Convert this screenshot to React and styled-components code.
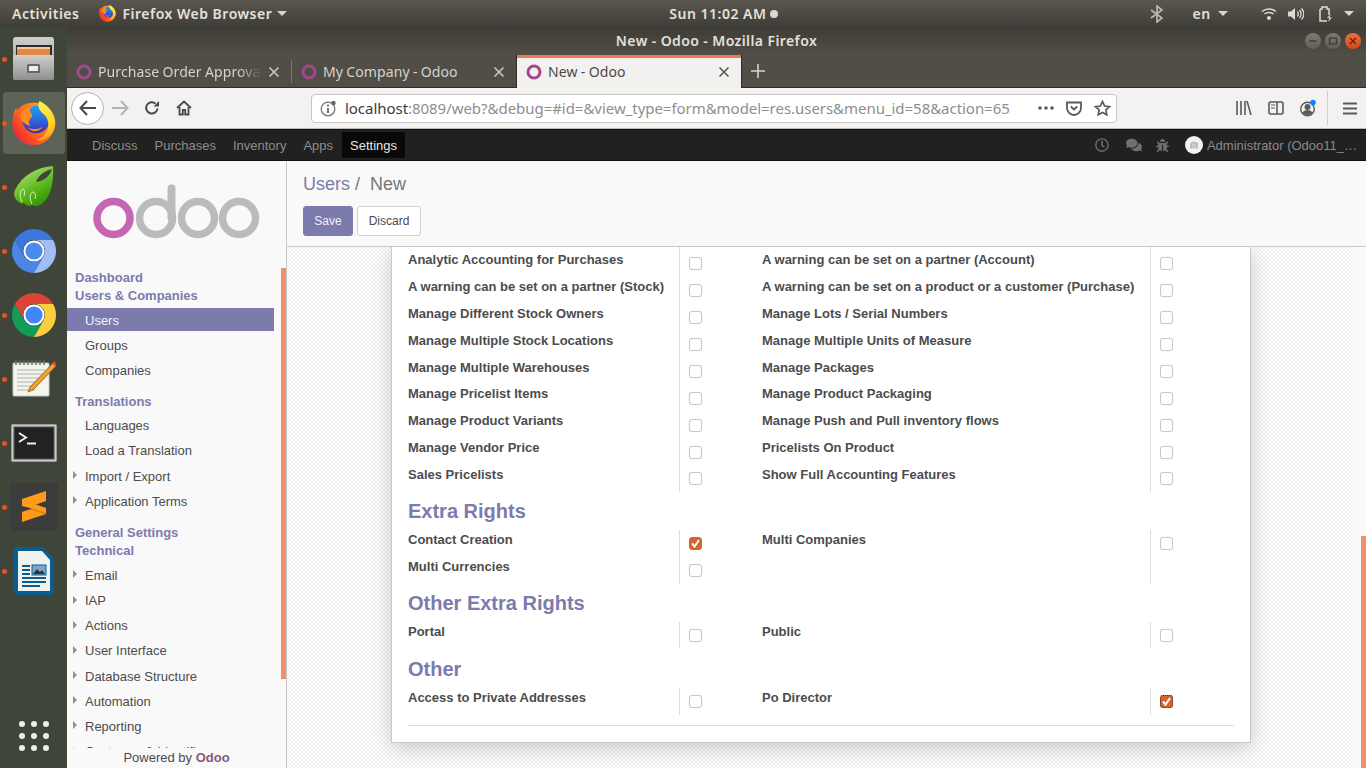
import React from "react";
import styled, { createGlobalStyle } from "styled-components";
import { FaRegClock, FaComments, FaBug, FaCamera } from "react-icons/fa";

const ubuntu = `"Noto Sans", "Open Sans", sans-serif`;
const arial = `"Liberation Sans", Arial, sans-serif`;

const Global = createGlobalStyle`
  html, body { margin: 0; padding: 0; width: 1366px; height: 768px; overflow: hidden; }
  * { box-sizing: border-box; }
  #root { width: 1366px; height: 768px; }
`;

const Screen = styled.div`width:1366px;height:768px;display:flex;flex-direction:column;overflow:hidden;font-family:${arial};`;
const TopBar = styled.header`
  height:27px;flex:none;display:flex;align-items:center;padding-left:12px;
  background:linear-gradient(#5a574f,#3f3d37);color:#e4e1da;font:600 14px/27px ${ubuntu};letter-spacing:.5px;
`;
const TopText = styled.span`margin-left:${p => p.$ml || 0}px;white-space:nowrap;display:flex;align-items:center;`;
const Caret = styled.i`
  display:block;margin-left:${p => p.$ml || 0}px;width:0;height:0;
  border-left:5px solid transparent;border-right:5px solid transparent;border-top:5px solid #d8d5ce;
`;
const TopIcon = styled.svg`display:block;margin-left:${p => p.$ml || 0}px;flex:none;`;
const ClockDot = styled.i`display:block;width:8px;height:8px;border-radius:50%;background:#d9d7d1;margin-left:4px;`;

const Desk = styled.div`flex:1;display:flex;min-height:0;`;
const Dock = styled.nav`width:67px;flex:none;background:#3f4539;display:flex;flex-direction:column;`;
const Tile = styled.div`height:64px;flex:none;position:relative;display:flex;align-items:center;justify-content:center;${p => p.$end ? "margin-top:auto;" : ""}`;
const ActiveBox = styled.div`
  width:62px;height:62px;border-radius:4px;display:flex;align-items:center;justify-content:center;
  background:${p => p.$on ? "#5e6357" : "transparent"};
`;
const RunDot = styled.i`position:absolute;left:2px;top:29.5px;width:5px;height:5px;border-radius:50%;background:#e95420;`;
const AppGrid = styled.div`display:grid;grid-template-columns:repeat(3,6px);gap:6px;`;
const AppDot = styled.i`display:block;width:6px;height:6px;border-radius:50%;background:#eeeeec;`;

const Win = styled.main`flex:1;min-width:0;display:flex;flex-direction:column;`;
const TitleBar = styled.div`
  height:28px;flex:none;position:relative;display:flex;align-items:center;justify-content:center;
  background:linear-gradient(#3e3c36,#504e46);color:#e3e0d9;font:600 14px/28px ${ubuntu};letter-spacing:.4px;
`;
const WinButtons = styled.div`position:absolute;right:5px;top:6px;display:flex;gap:4px;`;
const WinBtn = styled.div`
  width:16px;height:16px;border-radius:50%;display:flex;align-items:center;justify-content:center;
  background:${p => p.$close ? "linear-gradient(#f0703c,#d8491a)" : "linear-gradient(#7b7a73,#5e5d56)"};
`;
const TabBar = styled.div`height:33px;flex:none;display:flex;align-items:stretch;background:#504e46;border-bottom:1px solid #2e2d28;`;
const Tab = styled.div`
  width:224px;flex:none;display:flex;align-items:center;padding:1px 11px 0 9px;
  font:400 14px/1.4 ${ubuntu};letter-spacing:.1px;word-spacing:-.5px;color:${p => p.$active ? "#4c4b47" : "#d6d3cc"};
  ${p => p.$active ? "margin-left:1px;box-shadow:-1px 0 #2e2d28,1px 0 #2e2d28;background:#f2f1ef;border-top:3px solid #ee7b50;height:33px;padding-top:0;padding-bottom:2px;" : ""}
`;
const TabSep = styled.i`display:block;width:1px;margin:5px 0 4px;background:#77756c;flex:none;`;
const TabTitle = styled.span`
  flex:1;margin:0 6px;white-space:nowrap;overflow:hidden;
  ${p => p.$fade ? "-webkit-mask-image:linear-gradient(to right,#000 86%,transparent 100%);mask-image:linear-gradient(to right,#000 86%,transparent 100%);" : ""}
`;
const NewTab = styled.div`width:34px;display:flex;align-items:center;justify-content:center;flex:none;`;

const NavBar = styled.div`height:41px;flex:none;display:flex;align-items:center;background:#f3f2f0;border-bottom:1px solid #bdbcb8;padding-left:4px;`;
const BackBtn = styled.div`
  width:33px;height:33px;border-radius:50%;border:1px solid #b1b1b1;background:#fff;flex:none;
  display:flex;align-items:center;justify-content:center;
`;
const NavBtn = styled.div`width:${p => p.$w || 32}px;height:32px;flex:none;margin-left:${p => p.$ml || 0}px;display:flex;align-items:center;justify-content:center;`;
const UrlBox = styled.div`
  width:806px;height:29px;flex:none;margin-left:111px;background:#fff;border:1px solid #c8c7c3;border-radius:4px;
  display:flex;align-items:center;padding-left:8px;font:400 15px/1.4 ${ubuntu};letter-spacing:-.04px;color:#8e8e8e;white-space:nowrap;
`;
const Host = styled.span`color:#3b3b3b;`;
const UrlText = styled.span`margin-left:8px;flex:1;overflow:hidden;`;
const ToolSep = styled.i`display:block;width:1px;height:34px;background:#d0cfcb;margin:0 3px;flex:none;`;

const OdooBar = styled.div`
  height:32px;flex:none;background:#212121;border-top:1px solid #111;border-bottom:1px solid #111;
  display:flex;align-items:center;padding-left:17px;font:400 13px/1 ${arial};color:#8d8d8d;
`;
const AppLink = styled.a`
  height:26px;display:flex;align-items:center;padding:0 8px;white-space:nowrap;margin-right:1px;
  ${p => p.$active ? "background:#090909;color:#e6e6e6;margin-right:0;" : ""}
`;
const BarRight = styled.div`margin-left:auto;display:flex;align-items:center;height:100%;color:#6f6f6f;padding-right:9px;`;
const BarIcon = styled.span`display:flex;margin-right:${p => p.$mr}px;`;
const Avatar = styled.span`width:18px;height:18px;border-radius:50%;background:#f3f3f3;display:flex;align-items:center;justify-content:center;margin-right:4px;color:#bdbdbd;`;
const UserName = styled.span`color:#8a8a8a;white-space:nowrap;`;

const Body = styled.div`flex:1;min-height:0;display:flex;`;
const Side = styled.aside`width:220px;flex:none;background:#f9f9f9;border-right:1px solid #c9c9c9;display:flex;flex-direction:column;`;
const LogoWrap = styled.div`height:107px;flex:none;padding:23px 0 0 26px;`;
const SideScroll = styled.div`flex:1;min-height:0;display:flex;`;
const SideNav = styled.nav`flex:1;min-width:0;overflow:hidden;padding-right:7px;`;
const SideThumbCol = styled.div`width:5px;flex:none;`;
const SideThumb = styled.div`height:411px;background:#f09070;`;
const SectionTitle = styled.div`
  height:18px;padding-left:8px;font:700 13px/20px ${arial};color:#7c7bad;
  margin-top:${p => p.$mt || 0}px;white-space:nowrap;
`;
const Items = styled.ul`list-style:none;margin:4px 0 0;padding:0;`;
const Item = styled.li`
  height:23.2px;margin-bottom:2px;padding:1px 0 0 18px;position:relative;display:flex;align-items:center;
  font:400 13px/1 ${arial};white-space:nowrap;
  background:${p => p.$on ? "#7c7bad" : "transparent"};color:${p => p.$on ? "#f2f2f8" : "#4c4c4c"};
  ${p => p.$more ? `&::before{content:"";position:absolute;left:6px;top:7px;border-left:4px solid #8f8f8f;border-top:4px solid transparent;border-bottom:4px solid transparent;}` : ""}
`;
const SideFoot = styled.div`height:20px;flex:none;background:#f9f9f9;text-align:center;font:400 13px/20px ${arial};color:#4c4c4c;`;
const FootBrand = styled.b`color:#875a7b;`;

const Content = styled.section`flex:1;min-width:0;display:flex;flex-direction:column;`;
const Panel = styled.div`height:86px;flex:none;background:#f9f9f9;border-bottom:1px solid #c9c9c9;padding:12px 16px 0;`;
const Crumbs = styled.div`font:400 18px/22px ${arial};color:#777;white-space:pre;`;
const CrumbLink = styled.span`color:#7c7bad;`;
const Buttons = styled.div`display:flex;gap:4px;margin-top:11px;`;
const Btn = styled.button`
  height:30px;width:${p => p.$w}px;padding:0;border-radius:3px;font:400 12px/1 ${arial};
  background:${p => p.$primary ? "#7c7bad" : "#fff"};color:${p => p.$primary ? "#efeff6" : "#4c4c4c"};
  border:1px solid ${p => p.$primary ? "#7c7bad" : "#cfcfcf"};
`;
const Split = styled.div`flex:1;min-height:0;display:flex;`;
const FormArea = styled.div`
  flex:1;min-width:0;overflow:hidden;display:flex;justify-content:center;align-items:flex-start;padding-left:2px;
  background:repeating-conic-gradient(#f0f0f0 0 25%,#fdfdfd 0 50%) 0 0/4px 4px;
`;
const Sheet = styled.div`
  width:860px;flex:none;background:#fff;padding:0 16px 16px;border:1px solid #c8c8d3;border-top:0;
  box-shadow:0 5px 20px -1px rgba(0,0,0,.2);
`;
const Row = styled.div`
  display:grid;grid-template-columns:271px 83px 388px 84px;height:${p => p.$h || 26.875}px;
  font:700 13px/18.5px ${arial};color:#4c4c4c;
`;
const Lbl = styled.div`white-space:nowrap;padding-top:1px;`;
const ChkCell = styled.div`border-left:1px solid #ddd;padding:7.4px 0 0 9px;overflow:hidden;`;
const Box = styled.span`
  display:flex;align-items:center;justify-content:center;width:13px;height:13px;border-radius:3px;
  background:${p => p.$on ? "#d9622f" : "#fff"};
  border:1px solid ${p => p.$on ? "#d9622f" : "#c8c8c8"};box-shadow:${p => p.$on ? "none" : "0 0 1px #ddd"};
  ${p => p.$focus ? "outline:1px dotted #333;outline-offset:-1px;" : ""}
`;
const Heading = styled.h2`margin:0;height:${p => p.$h}px;padding-top:${p => p.$pt || 8}px;font:700 20px/22px ${arial};color:#7c7bad;`;
const Rule = styled.hr`margin:10px 0 0;border:0;border-top:1px solid #ddd;`;
const Track = styled.div`width:13px;flex:none;background:#f9f9f9;display:flex;flex-direction:column;justify-content:flex-end;align-items:flex-end;`;
const Thumb = styled.div`width:5px;height:232px;background:#f09070;`;

const Ring = () => (
  <svg width="16" height="16" viewBox="0 0 16 16" style={{ flex: "none" }}>
    <circle cx="8" cy="8" r="6" fill="none" stroke="#a2488f" strokeWidth="3" />
  </svg>
);
const Cross = ({ c = "#cfccc5" }) => (
  <svg width="12" height="12" viewBox="0 0 12 12" style={{ flex: "none" }}>
    <path d="M1.5 1.5l9 9M10.5 1.5l-9 9" stroke={c} strokeWidth="1.5" />
  </svg>
);
const Firefox = ({ s = 44, id = "a" }) => (
  <svg width={s} height={s} viewBox="0 0 64 64" style={{ display: "block", flex: "none" }}>
    <defs>
      <linearGradient id={id + "t"} x1=".2" y1="0" x2=".6" y2="1"><stop offset="0" stopColor="#fff45a" /><stop offset=".7" stopColor="#ffd21f" /><stop offset="1" stopColor="#ff9a1f" /></linearGradient>
      <linearGradient id={id + "b"} x1=".9" y1=".3" x2=".1" y2=".9"><stop offset="0" stopColor="#ffa01f" /><stop offset=".6" stopColor="#ff5a1f" /><stop offset="1" stopColor="#f0203c" /></linearGradient>
      <linearGradient id={id + "g"} x1=".5" y1="0" x2=".5" y2="1"><stop offset="0" stopColor="#1ea0f0" /><stop offset=".6" stopColor="#2f5fd8" /><stop offset="1" stopColor="#3b2ea8" /></linearGradient>
    </defs>
    <path d="M6 10c1 5 3 8 7 10L2 26c0-6 1-11 4-16z" fill="#ff7a1f" />
    <circle cx="31.500" cy="33" r="31" fill={`url(#${id}b)`} />
    <circle cx="35" cy="27" r="20" fill={`url(#${id}g)`} />
    <path d="M40 0c-4 8 0 14 7 20 8 8 8 22-1 31-3 3-7 5-10 6 14 1 25-9 27-22 1-15-9-28-23-35z" fill={`url(#${id}t)`} />
    <path d="M17 13c4-3 9-5 14-5-4 2-6 5-4 9 4 2 3 5 0 8-3 3-3 8 0 11-6-1-12-5-15-11-1-5 1-9 5-12z" fill="#ff8a1f" />
    <path d="M23 38c7 4 15 4 22-1-5 8-16 10-22 1z" fill="#ff8a1f" />
  </svg>
);
const Chrome = ({ s = 44, a = "#db4437", b = "#0f9d58", c = "#ffcd40", d = "#4285f4" }) => (
  <svg width={s} height={s} viewBox="4 4 40 40" style={{ display: "block" }}>
    <path fill={b} d="M6.68 14A20 20 0 0 0 24 44l8.66-15a10 10 0 0 1-17.32 0z" />
    <path fill={c} d="M24 44A20 20 0 0 0 41.32 14H24a10 10 0 0 1 8.66 15z" />
    <path fill={a} d="M6.68 14A20 20 0 0 1 41.32 14H24a10 10 0 0 0-8.66 15z" />
    <circle cx="24" cy="24" r="9.6" fill="#fff" />
    <circle cx="24" cy="24" r="7.8" fill={d} />
  </svg>
);
const Files = () => (
  <svg width="42" height="44" viewBox="0 0 42 44" style={{ display: "block" }}>
    <defs><linearGradient id="fb" x1="0" y1="0" x2="0" y2="1"><stop offset="0" stopColor="#cfcfcc" /><stop offset="1" stopColor="#8f8f8d" /></linearGradient></defs>
    <rect x="0" y="0" width="41" height="43" rx="3" fill="url(#fb)" />
    <rect x="3" y="8" width="36" height="11" fill="#2c2c2a" />
    <rect x="4" y="10" width="33" height="2" fill="#f6c78e" /><rect x="4" y="12" width="33" height="6" fill="#e0874a" />
    <rect x="0" y="18" width="41" height="25" rx="2" fill="url(#fb)" />
    <rect x="14" y="27" width="13" height="9" rx="1.5" fill="#666" /><rect x="16" y="29" width="9" height="5" fill="#ececec" />
  </svg>
);
const Leaf = () => (
  <svg width="40" height="42" viewBox="0 0 40 42" style={{ display: "block" }}>
    <defs><linearGradient id="lf" x1=".2" y1=".1" x2=".7" y2="1"><stop offset="0" stopColor="#a8e070" /><stop offset=".55" stopColor="#5cb81e" /><stop offset="1" stopColor="#2f8f00" /></linearGradient></defs>
    <path d="M39 0C24 1 8 9 1 24c-2 5 0 10 3 11 1 2 4 3 6 2 2 3 6 4 9 2 3 2 7 1 11-3C37 30 40 14 39 0z" fill="url(#lf)" />
    <path d="M38 3C30 5 24 10 22 16c8-1 14-6 16-13z" fill="#3f4539" />
    <g fill="none" stroke="#d6eeb2" strokeWidth="1"><path d="M8 36c-3-6-2-12 1-13 2 1 2 4 1 7" /><path d="M18 38c-3-5-2-12 1-12 3 1 3 4 2 7" /></g>
  </svg>
);
const Notepad = () => (
  <svg width="46" height="38" viewBox="0 0 46 38" style={{ display: "block" }}>
    <rect x="2" y="3" width="36" height="33" rx="1" fill="#f5f5f0" stroke="#c9c9c2" />
    <g stroke="#666" strokeWidth="1.4">{[5,9,13,17,21,25,29,33].map(x => <path key={x} d={`M${x} 0v5`} />)}</g>
    <g stroke="#b0b0a8" strokeWidth="1">{[10,14,18,22,26,30].map(y => <path key={y} d={`M6 ${y}h${y > 20 ? 18 : 28}`} />)}</g>
    <path d="M42 3l3 3-23 24-5 2 2-5z" fill="#f0a030" stroke="#8a5a10" strokeWidth=".8" />
    <path d="M41 3l3 3 1-1c1-2-2-5-4-2z" fill="#d9473a" />
  </svg>
);
const Terminal = () => (
  <svg width="46" height="38" viewBox="0 0 46 38" style={{ display: "block" }}>
    <rect x=".5" y=".5" width="45" height="37" rx="1" fill="#c9c9c6" stroke="#9a9a98" />
    <rect x="3" y="3" width="40" height="32" fill="#222" stroke="#555" />
    <path d="M8 9l7 4.5-7 4.5" fill="none" stroke="#eee" strokeWidth="2" /><path d="M16 19.5h9" stroke="#eee" strokeWidth="2" />
  </svg>
);
const Sublime = () => (
  <svg width="48" height="48" viewBox="0 0 48 48" style={{ display: "block" }}>
    <rect width="48" height="48" rx="4" fill="#3c3c3c" />
    <path d="M36 8v10l-10 3.500L36 25v6l-24 8V29l10-3.500L12 23v-7z" fill="#ff9a1a" />
    <path d="M12 29l10-3.500L36 30v1l-1 .3L22 27z" fill="#d97f10" />
  </svg>
);
const Writer = () => (
  <svg width="40" height="48" viewBox="0 0 40 48" style={{ display: "block" }}>
    <path d="M3 0h26l11 11v34a3 3 0 0 1-3 3H3a3 3 0 0 1-3-3V3a3 3 0 0 1 3-3z" fill="#0b5c8f" />
    <path d="M4 4h24l8 9v31H4z" fill="#f0f2ee" />
    <g fill="#0b5c8f"><rect x="8" y="18" width="8" height="2" /><rect x="8" y="22" width="8" height="2" /><rect x="8" y="26" width="8" height="2" /><rect x="8" y="30" width="24" height="2" /><rect x="8" y="34" width="24" height="2" /><rect x="8" y="38" width="18" height="2" /></g>
    <rect x="18" y="18" width="14" height="10" fill="#7ba8c8" stroke="#0b5c8f" />
    <path d="M19 27l4-5 3 3 2-2 3 4z" fill="#333" />
  </svg>
);

const Check = () => (
  <svg width="11" height="11" viewBox="0 0 11 11"><path d="M2 5.5l2.5 3L9 2" fill="none" stroke="#fff" strokeWidth="2" /></svg>
);
const Chk = ({ on, focus }) => <ChkCell><Box $on={on} $focus={focus}>{on && <Check />}</Box></ChkCell>;
const FormRow = ({ a, b, aOn, bOn, bFocus, noB }) => (
  <Row>
    <Lbl>{a}</Lbl><Chk on={aOn} />
    <Lbl>{b}</Lbl>{noB ? <ChkCell /> : <Chk on={bOn} focus={bFocus} />}
  </Row>
);

const rows = [
  ["Analytic Accounting for Purchases", "A warning can be set on a partner (Account)"],
  ["A warning can be set on a partner (Stock)", "A warning can be set on a product or a customer (Purchase)"],
  ["Manage Different Stock Owners", "Manage Lots / Serial Numbers"],
  ["Manage Multiple Stock Locations", "Manage Multiple Units of Measure"],
  ["Manage Multiple Warehouses", "Manage Packages"],
  ["Manage Pricelist Items", "Manage Product Packaging"],
  ["Manage Product Variants", "Manage Push and Pull inventory flows"],
  ["Manage Vendor Price", "Pricelists On Product"],
  ["Sales Pricelists", "Show Full Accounting Features"],
];

const Ic = ({ w = 18, h = 18, vb, children }) => (
  <svg width={w} height={h} viewBox={vb || `0 0 ${w} ${h}`} style={{ display: "block" }}>{children}</svg>
);

export default function App() {
  return (
    <Screen>
      <Global />
      <TopBar>
        <TopText>Activities</TopText>
        <TopText $ml={20}><Firefox s={17} id="top" /></TopText>
        <TopText $ml={6}>Firefox Web Browser</TopText>
        <Caret $ml={5} />
        <TopText $ml={382}>Sun 11:02 AM<ClockDot /></TopText>
        <TopIcon $ml={370} width="18" height="18" viewBox="0 0 18 18"><path d="M3 5l11 8-5 4V1l5 4-11 8" fill="none" stroke="#b9b7b0" strokeWidth="1.7" /></TopIcon>
        <TopText $ml={26}>en</TopText>
        <Caret $ml={7} />
        <TopIcon $ml={33} width="16" height="14" viewBox="0 0 16 14"><g fill="none" stroke="#dedbd4" strokeWidth="1.5"><path d="M1 4.5c4-3.5 10-3.5 14 0" /><path d="M3.5 7c2.5-2 6.5-2 9 0" /></g><circle cx="8" cy="11" r="2" fill="#dedbd4" /></TopIcon>
        <TopIcon $ml={11} width="16" height="14" viewBox="0 0 16 14"><path d="M0 4.5h3L7 1v12L3 9.5H0z" fill="#dedbd4" /><g fill="none" stroke="#dedbd4" strokeWidth="1.3"><path d="M9.5 4.5c1 1.500 1 3.500 0 5" /><path d="M11.500 3c2 2.500 2 5.500 0 8" /><path d="M13.500 1.500c3 3.500 3 7.500 0 11" /></g></TopIcon>
        <TopIcon $ml={15} width="14" height="16" viewBox="0 0 14 16"><path d="M1 3h2V1h5v2h2v6M1 3v12h7" fill="none" stroke="#dedbd4" strokeWidth="1.5" /><path d="M12 8l-4 4h2.500L9 16l4-4.500h-2.500z" fill="#dedbd4" /></TopIcon>
        <Caret $ml={11} />
      </TopBar>
      <Desk>
        <Dock>
          <Tile><RunDot /><ActiveBox><Files /></ActiveBox></Tile>
          <Tile><RunDot /><ActiveBox $on><Firefox s={44} id="dock" /></ActiveBox></Tile>
          <Tile><RunDot /><ActiveBox><Leaf /></ActiveBox></Tile>
          <Tile><RunDot /><ActiveBox><Chrome a="#3c78dc" b="#4a86e8" c="#a0bef5" d="#4b8bf0" /></ActiveBox></Tile>
          <Tile><RunDot /><ActiveBox><Chrome /></ActiveBox></Tile>
          <Tile><RunDot /><ActiveBox><Notepad /></ActiveBox></Tile>
          <Tile><RunDot /><ActiveBox><Terminal /></ActiveBox></Tile>
          <Tile><RunDot /><ActiveBox><Sublime /></ActiveBox></Tile>
          <Tile><RunDot /><ActiveBox><Writer /></ActiveBox></Tile>
          <Tile $end><AppGrid>{Array.from({ length: 9 }, (_, i) => <AppDot key={i} />)}</AppGrid></Tile>
        </Dock>
        <Win>
          <TitleBar>
            New - Odoo - Mozilla Firefox
            <WinButtons>
              <WinBtn><Ic w={10} h={10}><path d="M1.500 5h7" stroke="#3c3b37" strokeWidth="1.500" /></Ic></WinBtn>
              <WinBtn><Ic w={10} h={10}><rect x="1.500" y="2" width="7" height="6" fill="none" stroke="#3c3b37" strokeWidth="1.200" /></Ic></WinBtn>
              <WinBtn $close><Ic w={10} h={10}><path d="M2 2l6 6M8 2l-6 6" stroke="#5a2410" strokeWidth="1.300" /></Ic></WinBtn>
            </WinButtons>
          </TitleBar>
          <TabBar>
            <Tab><Ring /><TabTitle $fade>Purchase Order Approval</TabTitle><Cross /></Tab>
            <TabSep />
            <Tab><Ring /><TabTitle>My Company - Odoo</TabTitle><Cross /></Tab>
            <Tab $active><Ring /><TabTitle>New - Odoo</TabTitle><Cross c="#55544f" /></Tab>
            <NewTab><Ic w={14} h={14}><path d="M7 0v14M0 7h14" stroke="#d6d3cc" strokeWidth="1.600" /></Ic></NewTab>
          </TabBar>
          <NavBar>
            <BackBtn><Ic w={18} h={16}><path d="M8 1L1.500 8 8 15M2 8h15" fill="none" stroke="#4a4a4a" strokeWidth="2" /></Ic></BackBtn>
            <NavBtn><Ic w={18} h={16}><path d="M10 1l6.500 7-6.500 7M16 8H1" fill="none" stroke="#b4b4b4" strokeWidth="2" /></Ic></NavBtn>
            <NavBtn><Ic w={16} h={16}><path d="M13.500 8.500A5.700 5.700 0 1 1 11.500 3.500" fill="none" stroke="#4a4a4a" strokeWidth="2" /><path d="M15 1v5.500H9.500z" fill="#4a4a4a" /></Ic></NavBtn>
            <NavBtn><Ic w={16} h={16}><path d="M1 8l7-6.500L15 8M3.500 7v7.500h3.300V10h2.400v4.500h3.300V7" fill="none" stroke="#4a4a4a" strokeWidth="1.800" /></Ic></NavBtn>
            <UrlBox>
              <Ic w={17} h={17}><circle cx="8" cy="9" r="6.800" fill="none" stroke="#777" strokeWidth="1.300" /><path d="M8 8v5" stroke="#666" strokeWidth="1.800" /><circle cx="8" cy="5.600" r="1.100" fill="#666" /><circle cx="13.500" cy="3" r="2.200" fill="#666" /></Ic>
              <UrlText><Host>localhost</Host>:8089/web?&amp;debug=#id=&amp;view_type=form&amp;model=res.users&amp;menu_id=58&amp;action=65</UrlText>
              <NavBtn $w={28}><Ic w={18} h={4}><circle cx="3" cy="2" r="1.800" fill="#5a5a5a" /><circle cx="9" cy="2" r="1.800" fill="#5a5a5a" /><circle cx="15" cy="2" r="1.800" fill="#5a5a5a" /></Ic></NavBtn>
              <NavBtn $w={28}><Ic w={16} h={15}><path d="M1 1.500h14v5.500a7 7 0 0 1-14 0z" fill="none" stroke="#5a5a5a" strokeWidth="1.800" /><path d="M4.800 5.500L8 8.500l3.200-3" fill="none" stroke="#5a5a5a" strokeWidth="1.800" /></Ic></NavBtn>
              <NavBtn $w={28}><Ic w={17} h={16}><path d="M8.500 1.500l2.100 4.500 4.900.6-3.600 3.300.9 4.900-4.300-2.400-4.300 2.400.9-4.900L1.500 6.600l4.900-.6z" fill="none" stroke="#5a5a5a" strokeWidth="1.700" /></Ic></NavBtn>
            </UrlBox>
            <NavBtn $ml={111}><Ic w={16} h={14}><path d="M1 0v14M5 0v14M9 0v14M11 0l4 14" stroke="#5a5a5a" strokeWidth="1.600" /></Ic></NavBtn>
            <NavBtn><Ic w={16} h={14}><rect x="1" y="1" width="14" height="12" rx="2" fill="none" stroke="#5a5a5a" strokeWidth="1.600" /><path d="M9 1v12" stroke="#5a5a5a" strokeWidth="1.600" /><path d="M3 4h4M3 7h4" stroke="#5a5a5a" /></Ic></NavBtn>
            <NavBtn><Ic w={18} h={18}><circle cx="8.500" cy="10" r="6.800" fill="none" stroke="#5a5a5a" strokeWidth="1.400" /><circle cx="8.500" cy="8" r="3" fill="#5a5a5a" /><path d="M3.500 14c1-4 9-4 10 0-2 2.500-8 2.500-10 0z" fill="#5a5a5a" /><circle cx="14" cy="3.500" r="2.800" fill="#0a84ff" /></Ic></NavBtn>
            <ToolSep />
            <NavBtn $ml={3}><Ic w={14} h={13}><path d="M0 1.500h14M0 6.500h14M0 11.500h14" stroke="#5a5a5a" strokeWidth="2" /></Ic></NavBtn>
          </NavBar>
          <OdooBar>
            <AppLink>Discuss</AppLink>
            <AppLink>Purchases</AppLink>
            <AppLink>Inventory</AppLink>
            <AppLink>Apps</AppLink>
            <AppLink $active>Settings</AppLink>
            <BarRight>
              <BarIcon $mr={17}><FaRegClock size={14} /></BarIcon>
              <BarIcon $mr={14}><FaComments size={16} /></BarIcon>
              <BarIcon $mr={16}><FaBug size={13} /></BarIcon>
              <Avatar><FaCamera size={8} /></Avatar>
              <UserName>Administrator (Odoo11_…</UserName>
            </BarRight>
          </OdooBar>
          <Body>
            <Side>
              <LogoWrap>
                <svg width="168" height="56" viewBox="0 0 168 56" style={{ display: "block" }}>
                  <circle cx="20.500" cy="34" r="16.500" fill="none" stroke="#c566b5" strokeWidth="7.500" />
                  <g fill="none" stroke="#bbbbbb" strokeWidth="7.500">
                    <circle cx="63" cy="34" r="16.500" />
                    <path d="M78.500 34V4.500" strokeLinecap="round" strokeWidth="8" />
                    <circle cx="105" cy="34" r="16.500" />
                    <circle cx="146" cy="34" r="16.500" />
                  </g>
                </svg>
              </LogoWrap>
              <SideScroll>
                <SideNav>
                  <SectionTitle>Dashboard</SectionTitle>
                  <SectionTitle>Users &amp; Companies</SectionTitle>
                  <Items>
                    <Item $on>Users</Item>
                    <Item>Groups</Item>
                    <Item>Companies</Item>
                  </Items>
                  <SectionTitle $mt={10}>Translations</SectionTitle>
                  <Items>
                    <Item>Languages</Item>
                    <Item>Load a Translation</Item>
                    <Item $more>Import / Export</Item>
                    <Item $more>Application Terms</Item>
                  </Items>
                  <SectionTitle $mt={11}>General Settings</SectionTitle>
                  <SectionTitle>Technical</SectionTitle>
                  <Items>
                    <Item $more>Email</Item>
                    <Item $more>IAP</Item>
                    <Item $more>Actions</Item>
                    <Item $more>User Interface</Item>
                    <Item $more>Database Structure</Item>
                    <Item $more>Automation</Item>
                    <Item $more>Reporting</Item>
                    <Item $more>Customer &amp; Identifiers</Item>
                  </Items>
                </SideNav>
                <SideThumbCol><SideThumb /></SideThumbCol>
              </SideScroll>
              <SideFoot>Powered by <FootBrand>Odoo</FootBrand></SideFoot>
            </Side>
            <Content>
              <Panel>
                <Crumbs><CrumbLink>Users</CrumbLink> /  New</Crumbs>
                <Buttons>
                  <Btn $primary $w={50}>Save</Btn>
                  <Btn $w={64}>Discard</Btn>
                </Buttons>
              </Panel>
              <Split>
                <FormArea>
                  <Sheet>
                    <Row $h={3}><Lbl /><ChkCell /><Lbl /><ChkCell /></Row>
                    {rows.map(r => <FormRow key={r[0]} a={r[0]} b={r[1]} />)}
                    <Heading $h={38.1}>Extra Rights</Heading>
                    <FormRow a="Contact Creation" aOn b="Multi Companies" />
                    <FormRow a="Multi Currencies" b="" noB />
                    <Heading $h={37.9}>Other Extra Rights</Heading>
                    <FormRow a="Portal" b="Public" />
                    <Heading $h={39.5} $pt={10}>Other</Heading>
                    <FormRow a="Access to Private Addresses" b="Po Director" bOn bFocus />
                    <Rule />
                  </Sheet>
                </FormArea>
                <Track><Thumb /></Track>
              </Split>
            </Content>
          </Body>
        </Win>
      </Desk>
    </Screen>
  );
}
